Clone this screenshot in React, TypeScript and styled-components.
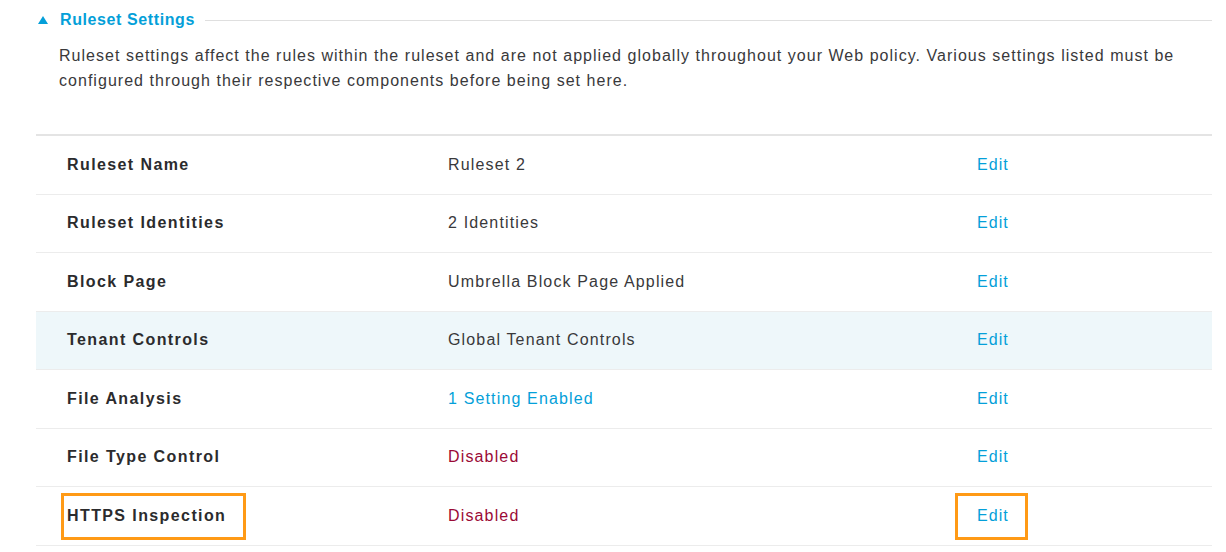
import React from 'react'
import styled, { createGlobalStyle } from 'styled-components'

const GlobalStyle = createGlobalStyle`
  body {
    margin: 0;
    background: #ffffff;
    font-family: "Liberation Sans", Arial, sans-serif;
    color: #39393b;
  }
`

const Page = styled.div`
  padding: 10px 14px 0 36px;
`

const Header = styled.div`
  display: flex;
  align-items: center;
  height: 20px;
`

const Caret = styled.span`
  width: 0;
  height: 0;
  border-left: 5px solid transparent;
  border-right: 5px solid transparent;
  border-bottom: 8px solid #049fd9;
  margin: 0 12px 0 2px;
`

const Title = styled.span`
  font-size: 16px;
  font-weight: 700;
  color: #049fd9;
  letter-spacing: 0.6px;
`

const Rule = styled.span`
  flex: 1;
  height: 1px;
  background: #dfdfdf;
  margin-left: 10px;
`

const Description = styled.p`
  margin: 13px 0 0 23px;
  font-size: 16px;
  line-height: 25px;
  letter-spacing: 1.03px;
  color: #39393b;
`

const Table = styled.div`
  margin-top: 41px;
  border-top: 2px solid #e4e4e4;
`

const Row = styled.div<{ $hover?: boolean }>`
  display: grid;
  grid-template-columns: 412px 529px 1fr;
  align-items: center;
  height: 57.5px;
  border-bottom: 1px solid #ececec;
  background: ${p => (p.$hover ? '#eef7fa' : 'transparent')};
`

const Label = styled.span`
  padding-left: 31px;
  font-size: 16px;
  font-weight: 700;
  letter-spacing: 1.4px;
  color: #2b2b2d;
`

const Value = styled.span<{ $tone?: 'link' | 'off' }>`
  font-size: 16px;
  letter-spacing: 1.15px;
  color: ${p => (p.$tone === 'link' ? '#049fd9' : p.$tone === 'off' ? '#9b0a36' : '#39393b')};
`

const EditLink = styled.span`
  font-size: 16px;
  letter-spacing: 1.05px;
  color: #049fd9;
`

const Marked = styled.span<{ $w: number; $l: number }>`
  position: relative;
  display: inline-block;

  &::after {
    content: '';
    position: absolute;
    top: -14px;
    bottom: -15px;
    left: ${p => -p.$l}px;
    width: ${p => p.$w}px;
    border: 3px solid #ff9a16;
    box-sizing: border-box;
  }
`

type Tone = 'link' | 'off' | undefined

const rows: { label: string; value: string; tone?: Tone; hover?: boolean; mark?: boolean }[] = [
  { label: 'Ruleset Name', value: 'Ruleset 2' },
  { label: 'Ruleset Identities', value: '2 Identities' },
  { label: 'Block Page', value: 'Umbrella Block Page Applied' },
  { label: 'Tenant Controls', value: 'Global Tenant Controls', hover: true },
  { label: 'File Analysis', value: '1 Setting Enabled', tone: 'link' },
  { label: 'File Type Control', value: 'Disabled', tone: 'off' },
  { label: 'HTTPS Inspection', value: 'Disabled', tone: 'off', mark: true },
]

export default function App() {
  return (
    <Page>
      <GlobalStyle />
      <Header>
        <Caret />
        <Title>Ruleset Settings</Title>
        <Rule />
      </Header>
      <Description>
        Ruleset settings affect the rules within the ruleset and are not applied globally throughout your Web policy. Various settings listed must be configured through their respective components before being set here.
      </Description>
      <Table>
        {rows.map(r => (
          <Row key={r.label} $hover={r.hover}>
            <Label>
              {r.mark ? <Marked $l={6} $w={185}>{r.label}</Marked> : r.label}
            </Label>
            <Value $tone={r.tone}>{r.value}</Value>
            <EditLink>
              {r.mark ? <Marked $l={22} $w={73}>Edit</Marked> : 'Edit'}
            </EditLink>
          </Row>
        ))}
      </Table>
    </Page>
  )
}
